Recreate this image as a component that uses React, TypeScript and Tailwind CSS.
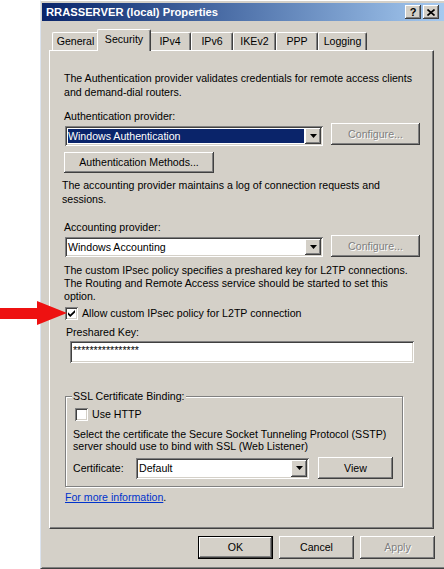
import React from "react";

const raised =
  "shadow-[inset_-1px_-1px_#404040,inset_1px_1px_#ffffff,inset_-2px_-2px_#808080,inset_2px_2px_#d4d0c8]";
const sunken =
  "shadow-[inset_1px_1px_#808080,inset_-1px_-1px_#ffffff,inset_2px_2px_#404040,inset_-2px_-2px_#d4d0c8]";
const disabled = "text-[#808080] [text-shadow:1px_1px_0_#ffffff]";

function Btn({
  className,
  children,
  off,
}: {
  className: string;
  children: React.ReactNode;
  off?: boolean;
}) {
  return (
    <div
      className={`${className} shrink-0 flex items-center justify-center bg-[#d4d0c8] ${raised} ${
        off ? disabled : ""
      }`}
    >
      {children}
    </div>
  );
}

function Combo({
  className,
  text,
  selected,
}: {
  className: string;
  text: string;
  selected?: boolean;
}) {
  return (
    <div className={`${className} shrink-0 flex p-[2px] bg-white ${sunken}`}>
      <div className="flex-1 flex min-w-0 p-[1px]">
        <div
          className={
            selected
              ? "flex-1 flex items-center bg-[#0a246a] text-white"
              : "flex-1 flex items-center"
          }
        >
          {text}
        </div>
      </div>
      <div
        className={`w-[16px] flex items-center justify-center bg-[#d4d0c8] ${raised}`}
      >
        <svg width="7" height="4" viewBox="0 0 7 4">
          <path d="M0 0H7L3.5 4Z" fill="#000" />
        </svg>
      </div>
    </div>
  );
}

function Check({ checked }: { checked?: boolean }) {
  return (
    <div
      className={`w-[13px] h-[13px] shrink-0 bg-white flex items-center justify-center ${sunken}`}
    >
      {checked && (
        <svg width="7" height="7" viewBox="0 0 7 7">
          <path d="M0 2.2L2.3 4.4L7 0V2.6L2.3 7L0 4.8Z" fill="#000" />
        </svg>
      )}
    </div>
  );
}

const tabBase =
  "flex items-center justify-center h-[18px] border-t border-l border-r border-t-white border-l-white border-r-[#404040] shadow-[inset_-1px_0_#808080] rounded-t-[2px]";

export default function App() {
  return (
    <div className="relative w-[444px] h-[569px] overflow-hidden bg-white flex font-['Liberation_Sans',Arial,sans-serif] text-[10.6px] leading-[13px] text-black">
      {/* window */}
      <div className="ml-[40px] w-[404px] h-[569px] bg-[#d4d0c8] flex flex-col border-l border-l-[#dce4f0] border-t border-t-white border-b border-b-[#404040] shadow-[inset_1px_0_#d4d0c8,inset_0_-1px_#808080] pl-[1px] pt-[2px]">
        {/* title bar */}
        <div className="h-[18px] flex items-center bg-gradient-to-r from-[#0a246a] to-[#a6caf0] pl-[4px] pr-[5px]">
          <div className="flex-1 text-white font-bold text-[11.2px]">
            RRASSERVER (local) Properties
          </div>
          <div
            className={`w-[16px] h-[14px] flex items-center justify-center bg-[#d4d0c8] font-bold text-[11px] ${raised}`}
          >
            ?
          </div>
          <div
            className={`ml-[2px] w-[16px] h-[14px] flex items-center justify-center bg-[#d4d0c8] ${raised}`}
          >
            <svg width="8" height="7" viewBox="0 0 8 7">
              <path
                d="M0.5 0.5L7.5 6.5M7.5 0.5L0.5 6.5"
                stroke="#000"
                strokeWidth="1.6"
              />
            </svg>
          </div>
        </div>

        {/* tabs */}
        <div className="mt-[8px] ml-[10px] h-[21px] flex items-end">
          <div className={`${tabBase} w-[47px]`}>General</div>
          <div className="relative z-10 -mx-[2px] -mb-[1px] w-[54px] h-[22px] flex justify-center pt-[3px] bg-[#d4d0c8] border-t border-l border-r border-t-white border-l-white border-r-[#404040] shadow-[inset_-1px_0_#808080] rounded-t-[2px]">
            Security
          </div>
          <div className={`${tabBase} w-[42px]`}>IPv4</div>
          <div className={`${tabBase} w-[42px]`}>IPv6</div>
          <div className={`${tabBase} w-[43px]`}>IKEv2</div>
          <div className={`${tabBase} w-[42px]`}>PPP</div>
          <div className={`${tabBase} w-[49px]`}>Logging</div>
        </div>

        {/* panel */}
        <div className="ml-[7px] w-[385px] h-[479px] flex flex-col pl-[14px] border border-t-white border-l-white border-r-[#404040] border-b-[#404040] shadow-[inset_-1px_-1px_#808080]">
          <p className="mt-[20px] leading-[14px]">
            The Authentication provider validates credentials for remote access clients
            <br />
            and demand-dial routers.
          </p>
          <div className="mt-[11px]">Authentication provider:</div>
          <div className="flex items-start">
            <Combo
              className="mt-[3px] ml-[1px] w-[258px] h-[20px]"
              text="Windows Authentication"
              selected
            />
            <Btn className="ml-[8px] w-[89px] h-[22px]" off>
              Configure...
            </Btn>
          </div>
          <Btn className="mt-[6px] w-[150px] h-[21px]">Authentication Methods...</Btn>
          <p className="mt-[5px] -ml-[2px] leading-[14px]">
            The accounting provider maintains a log of connection requests and
            <br />
            sessions.
          </p>
          <div className="mt-[15px]">Accounting provider:</div>
          <div className="mt-[1px] flex items-start">
            <Combo
              className="mt-[2px] ml-[1px] w-[258px] h-[20px]"
              text="Windows Accounting"
            />
            <Btn className="ml-[8px] w-[89px] h-[22px]" off>
              Configure...
            </Btn>
          </div>
          <p className="mt-[7px]">
            The custom IPsec policy specifies a preshared key for L2TP connections.
            <br />
            The Routing and Remote Access service should be started to set this
            <br />
            option.
          </p>
          <div className="mt-[4px] flex items-center">
            <div className="ml-[1px]">
              <Check checked />
            </div>
            <span className="ml-[4px]">Allow custom IPsec policy for L2TP connection</span>
          </div>
          <div className="mt-[6px] ml-[2px]">Preshared Key:</div>
          <div
            className={`mt-[2px] ml-[6px] w-[344px] h-[22px] bg-white pl-[3px] pt-[3px] ${sunken}`}
          >
            ****************
          </div>

          {/* group box */}
          <div className="relative mt-[33px] ml-[1px] w-[338px] h-[91px] flex flex-col pl-[7px] border border-[#808080] shadow-[1px_1px_0_#ffffff,inset_1px_1px_0_#ffffff]">
            <div className="absolute left-[6px] -top-[7px] px-[1px] bg-[#d4d0c8]">
              SSL Certificate Binding:
            </div>
            <div className="mt-[11px] flex items-center">
              <div className="ml-[2px]">
                <Check />
              </div>
              <span className="ml-[4px]">Use HTTP</span>
            </div>
            <p className="mt-[7px] leading-[12px]">
              Select the certificate the Secure Socket Tunneling Protocol (SSTP)
              <br />
              server should use to bind with SSL (Web Listener)
            </p>
            <div className="mt-[5px] flex items-center">
              <span className="w-[63px] shrink-0">Certificate:</span>
              <Combo className="w-[173px] h-[21px]" text="Default" />
              <Btn className="ml-[9px] w-[75px] h-[22px]">View</Btn>
            </div>
          </div>

          <div className="mt-[4px] ml-[1px]">
            <span className="text-[#0033cc] underline">For more information</span>.
          </div>
        </div>

        {/* bottom buttons */}
        <div className="mt-[7px] w-[393px] flex justify-end gap-[6px]">
          <div className="w-[75px] h-[23px] border border-black flex">
            <Btn className="flex-1 h-full">OK</Btn>
          </div>
          <Btn className="w-[75px] h-[23px]">Cancel</Btn>
          <Btn className="w-[75px] h-[23px]" off>
            Apply
          </Btn>
        </div>
      </div>

      {/* red arrow */}
      <svg
        className="absolute left-0 top-[300px]"
        width="70"
        height="28"
        viewBox="0 0 70 28"
      >
        <path d="M0 8H37V1L67 13L37 25V19H0Z" fill="#ee1111" />
      </svg>
    </div>
  );
}
